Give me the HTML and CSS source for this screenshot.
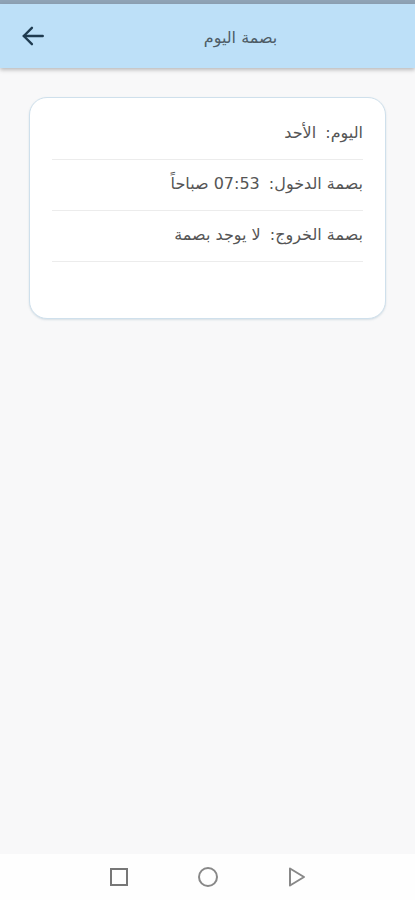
FILE: index.html
```html
<!DOCTYPE html>
<html lang="ar" dir="rtl">
<head>
    <meta charset="UTF-8">
    <meta name="viewport" content="width=device-width, initial-scale=1.0">
    <title>بصمة اليوم</title>
    <link rel="stylesheet" href="styles.css">
</head>
<body>
    <div class="status-bar"></div>
    <header class="app-bar">
        <h1 class="title">بصمة اليوم</h1>
        <button class="back" type="button" aria-label="رجوع">
            <svg width="26" height="26" viewBox="0 0 24 24" fill="none" stroke="#1f3b50" stroke-width="2.2" stroke-linecap="round" stroke-linejoin="round">
                <path d="M21 12H3.5"/>
                <path d="M11 4.5L3.5 12l7.5 7.5"/>
            </svg>
        </button>
    </header>

    <main class="content">
        <div class="card">
            <div class="row"><span class="label">اليوم:</span> <span>الأحد</span></div>
            <div class="row"><span class="label">بصمة الدخول:</span> <span>07:53 صباحاً</span></div>
            <div class="row"><span class="label">بصمة الخروج:</span> <span>لا يوجد بصمة</span></div>
        </div>
    </main>

    <nav class="nav-bar" dir="ltr">
        <svg width="20" height="20" viewBox="0 0 20 20"><rect x="2" y="2" width="16" height="16" fill="none" stroke="#777" stroke-width="2"/></svg>
        <svg width="22" height="22" viewBox="0 0 22 22"><circle cx="11" cy="11" r="9" fill="none" stroke="#888" stroke-width="2"/></svg>
        <svg width="20" height="22" viewBox="0 0 20 22"><path d="M3 2.5L17 11 3 19.5z" fill="none" stroke="#888" stroke-width="2" stroke-linejoin="round"/></svg>
    </nav>
</body>
</html>
```

FILE: styles.css
```css
html, body {
    height: 100%;
}

body {
    margin: 0;
    font-family: 'DejaVu Sans', sans-serif;
    background-color: #f8f8f9;
    color: #555;
    display: flex;
    flex-direction: column;
}

.status-bar {
    height: 4px;
    background-color: #8fa3b6;
}

.app-bar {
    height: 64px;
    background-color: #bde0f8;
    display: flex;
    align-items: center;
    box-shadow: 0 2px 4px rgba(0, 0, 0, 0.25);
    position: relative;
    z-index: 1;
}

.title {
    flex: 1;
    margin: 0;
    padding-top: 3px;
    text-align: center;
    font-size: 16px;
    font-weight: normal;
    color: #4e5c66;
}

.back {
    width: 66px;
    height: 64px;
    border: none;
    background: none;
    padding: 0;
    display: flex;
    align-items: center;
    justify-content: center;
}

.content {
    flex: 1;
    padding: 29px 29px 0 29px;
}

.card {
    background-color: #fff;
    border: 1px solid #cfe0ec;
    border-radius: 18px;
    padding: 19px 22px 48px 22px;
    box-shadow: 0 1px 2px rgba(120, 150, 170, 0.25);
}

.row {
    font-size: 16px;
    line-height: 20px;
    padding: 6px 0 16px 0;
    border-bottom: 1px solid #ececec;
    margin-bottom: 8px;
}

.row .label {
    margin-left: 4px;
}

.nav-bar {
    height: 46px;
    background-color: #fefefe;
    display: flex;
    align-items: center;
    justify-content: center;
    gap: 68px;
}
```
